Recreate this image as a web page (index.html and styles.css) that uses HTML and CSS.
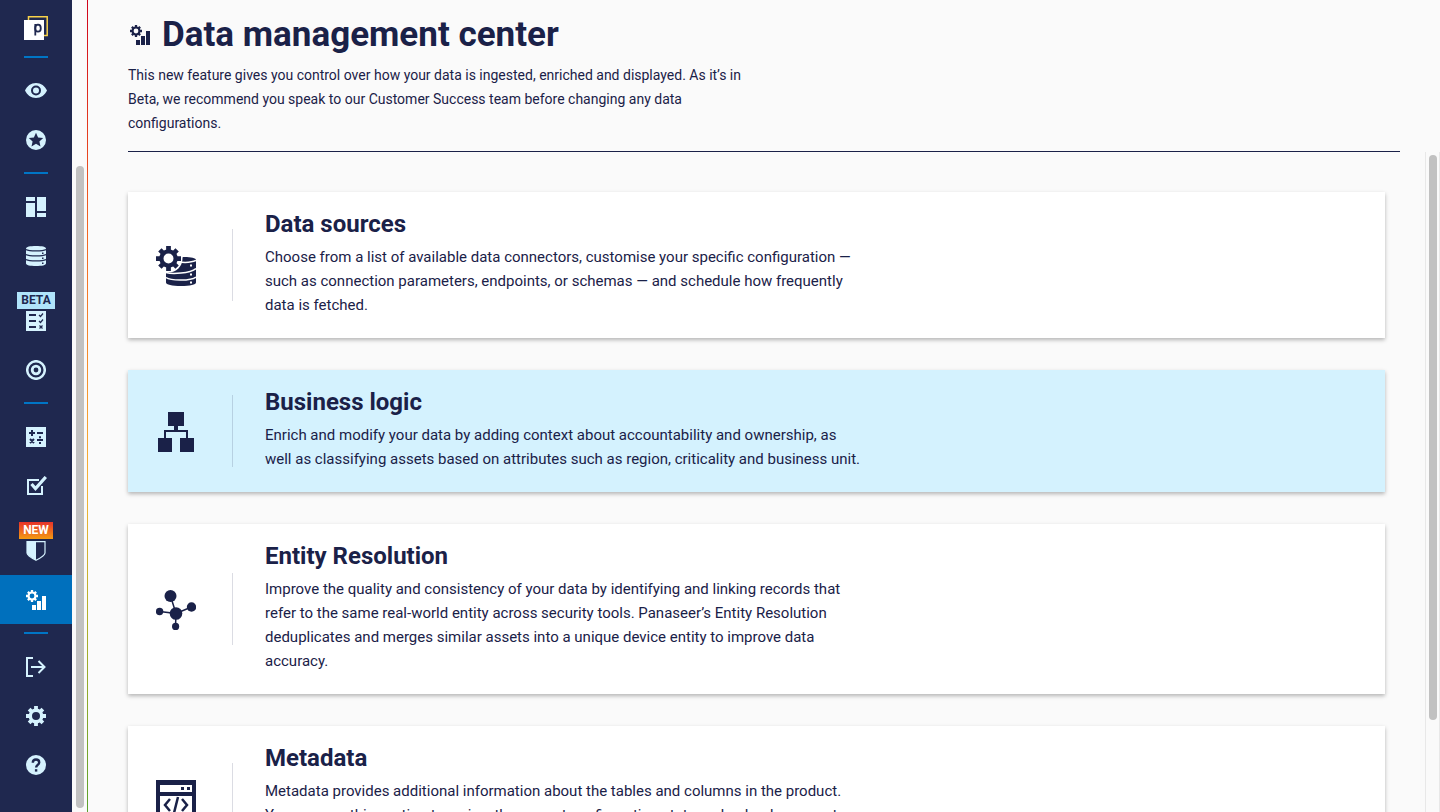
FILE: index.html
```html
<!DOCTYPE html>
<html lang="en">
  <head>
    <meta charset="utf-8" />
    <title>Data management center</title>
    <meta name="viewport" content="width=device-width, initial-scale=1.0" />
    <link rel="stylesheet" href="styles.css">
  </head>

  <body>
    <!-- Shared icons -->
    <svg class="sprite" aria-hidden="true">
      <symbol id="gear" viewBox="-10 -10 20 20">
        <circle r="5.700" fill="none" stroke="currentColor" stroke-width="3.4"></circle>
        <path fill="none" stroke="currentColor" stroke-width="3.8" d="M0-10V-6M0 10V6M-10 0H-6M10 0H6M6.9-6.9L4.3-4.3M-6.9-6.9L-4.3-4.3M6.9 6.9L4.3 4.3M-6.9 6.9L-4.3 4.3"></path>
      </symbol>
      <symbol id="manage" viewBox="0 0 20 20">
        <use href="#gear" x="0" y="0" width="12" height="12"></use>
        <path fill="currentColor" d="M6 15h4v5H6zM11 11h4v9h-4zM16 6h4v14h-4z"></path>
      </symbol>
    </svg>

    <div class="app">
      <nav class="sidebar" aria-label="Main">
        <a class="logo" href="#" aria-label="Home">
          <svg viewBox="0 0 24 24">
            <path fill="none" stroke="#f8d24a" stroke-width="1.5" d="M4.5 4V.8h18.7v18.7H20"></path>
            <path fill="#fff" d="M0 4h20v20H0z"></path>
            <path fill="none" stroke="#1f284f" stroke-width="1.8" d="M11.3 8v11.500"></path>
            <ellipse cx="14" cy="12.200" rx="2.8" ry="3.5" fill="none" stroke="#1f284f" stroke-width="1.8"></ellipse>
          </svg>
        </a>
        <hr>
        <a class="item" href="#" aria-label="Overview">
          <svg class="wide" viewBox="0 0 22 20"><path fill="currentColor" fill-rule="evenodd" d="M0 9.500C2 5 6 2 11 2S20 5 22 9.500C20 14 16 17 11 17S2 14 0 9.500zM11 4.500a5 5 0 1 0 0 10a5 5 0 0 0 0-10z"></path><circle cx="11" cy="9.500" r="3" fill="currentColor"></circle></svg>
        </a>
        <a class="item" href="#" aria-label="Favourites">
          <svg viewBox="0 0 20 20"><path fill="currentColor" fill-rule="evenodd" d="M10 0a10 10 0 1 0 0 20a10 10 0 0 0 0-20zM10 2.800l2.100 4.700 5.100.5-3.800 3.400 1.100 5-4.500-2.600-4.500 2.600 1.100-5L2.800 8l5.100-.5z"></path></svg>
        </a>
        <hr>
        <a class="item" href="#" aria-label="Dashboards">
          <svg viewBox="0 0 20 20"><path fill="currentColor" d="M0 0h9v4H0zM0 6h9v14H0zM11 0h9v14h-9zM11 16h9v4h-9z"></path></svg>
        </a>
        <a class="item" href="#" aria-label="Data">
          <svg viewBox="0 0 20 20">
            <path fill="currentColor" d="M0 2.500C0 .8 4 0 10 0s10 .8 10 2.500v15c0 1.700-4 2.500-10 2.500S0 19.200 0 17.500z"></path>
            <path class="cut" d="M0 3.500C3 5.300 17 5.300 20 3.500M0 8.500C3 10.300 17 10.300 20 8.500M0 13.500C3 15.300 17 15.300 20 13.500"></path>
            <path fill="#1f284f" d="M16 6.500h1.500v1.500H16zM16 11.500h1.500V13H16zM16 16.500h1.500V18H16z"></path>
          </svg>
        </a>
        <a class="item tagged" href="#">
          <span class="tag beta">BETA</span>
          <svg viewBox="0 0 20 20">
            <path fill="currentColor" d="M0 0h20v20H0z"></path>
            <path class="cut thick" d="M3 4h7M3 10h7M3 16h7"></path>
            <path class="cut" d="M13 4l1.500 1.500L17 2.500M13 10l1.500 1.500L17 8.500M13.500 14.500l3 3M16.500 14.500l-3 3"></path>
          </svg>
        </a>
        <a class="item" href="#" aria-label="Targets">
          <svg viewBox="0 0 20 20"><g fill="none" stroke="currentColor" stroke-width="2.500"><circle cx="10" cy="10" r="8.800"></circle><circle cx="10" cy="10" r="3.800" stroke-width="2.800"></circle></g></svg>
        </a>
        <hr>
        <a class="item" href="#" aria-label="Metrics">
          <svg viewBox="0 0 20 20">
            <path fill="currentColor" d="M0 0h20v20H0z"></path>
            <path class="cut thick" d="M3 6h6M6 3v6M11 6h6M11 13h6M4 12l4 4M8 12l-4 4"></path>
            <path fill="#1f284f" d="M13 9.200h2v2h-2zM13 15h2v2h-2z"></path>
          </svg>
        </a>
        <a class="item" href="#" aria-label="Controls">
          <svg class="wide" viewBox="0 0 22 20"><path fill="none" stroke="currentColor" stroke-width="2" d="M14 4H3v14h14V10"></path><path fill="none" stroke="currentColor" stroke-width="3.200" d="M6.500 8l4 4.500L20.800 1"></path></svg>
        </a>
        <a class="item tagged" href="#">
          <span class="tag new">NEW</span>
          <svg viewBox="0 0 20 20"><path fill="none" stroke="currentColor" stroke-width="1.200" d="M1 .6h18V12c0 1.800-5 5.200-9 7.300C6 17.200 1 13.800 1 12z"></path><path fill="currentColor" d="M1 1h9v18.300C6 17.200 1 13.800 1 12z"></path></svg>
        </a>
        <a class="item active" href="#" aria-label="Data management center" aria-current="page">
          <svg><use href="#manage"></use></svg>
        </a>
        <hr>
        <a class="item" href="#" aria-label="Log out">
          <svg viewBox="0 0 20 20"><path fill="none" stroke="currentColor" stroke-width="2" d="M7 1H1v18h6M5 10h14M12.500 4l6 6-6 6"></path></svg>
        </a>
        <a class="item" href="#" aria-label="Settings">
          <svg><use href="#gear"></use></svg>
        </a>
        <a class="item" href="#" aria-label="Help">
          <svg viewBox="0 0 20 20"><circle cx="10" cy="10" r="10" fill="currentColor"></circle><path fill="none" stroke="#1f284f" stroke-width="2.400" d="M6.800 7.800c0-2 1.300-3.300 3.200-3.300S13.200 5.800 13.200 7.400c0 2.400-3.100 2.600-3.100 5.200"></path><path fill="#1f284f" d="M8.900 14.200h2.400v2.400H8.900z"></path></svg>
        </a>
      </nav>
      <div class="rail rail-left"><div class="thumb"></div></div>

      <main>
        <header>
          <h1><svg><use href="#manage"></use></svg>Data management center</h1>
          <p>This new feature gives you control over how your data is ingested, enriched and displayed. As it’s in Beta, we recommend you speak to our Customer Success team before changing any data configurations.</p>
        </header>

        <div class="content">
          <div class="cards">
            <a class="card" href="#">
              <span class="icon">
                <svg viewBox="0 0 40 40">
                  <path fill="currentColor" d="M27 11C34 10.800 40 12 40 13.800v22.700c0 2-6 3.500-15 3.500s-15-1.500-15-3.500V25z"></path>
                  <path fill="none" stroke="#fff" stroke-width="1.500" d="M22 16c8 .8 15 0 18-1.500M10 26.500C16 28.200 34 27.500 40 22.500M10 31.500C15 35 35 35 40 31"></path>
                  <path fill="#fff" d="M34 18.500h2v2h-2zM34 27.500h2v2h-2zM34 35.500h2v2h-2z"></path>
                  <circle cx="12.500" cy="12.500" r="14" fill="#fff"></circle>
                  <use href="#gear" x="0" y="0" width="25" height="25"></use>
                </svg>
              </span>
              <div class="text">
                <h2>Data sources</h2>
                <p>Choose from a list of available data connectors, customise your specific configuration — such as connection parameters, endpoints, or schemas — and schedule how frequently data is fetched.</p>
              </div>
            </a>

            <a class="card selected" href="#">
              <span class="icon">
                <svg viewBox="0 0 40 40">
                  <path fill="currentColor" d="M12 0h16v14H12zM2 26h14v14H2zM24 26h14v14H24z"></path>
                  <path fill="none" stroke="currentColor" stroke-width="2" d="M9 26v-7h22v7"></path>
                  <path fill="currentColor" d="M18 14h4v5h-4z"></path>
                </svg>
              </span>
              <div class="text">
                <h2>Business logic</h2>
                <p>Enrich and modify your data by adding context about accountability and ownership, as well as classifying assets based on attributes such as region, criticality and business unit.</p>
              </div>
            </a>

            <a class="card" href="#">
              <span class="icon">
                <svg viewBox="0 0 40 40">
                  <path fill="none" stroke="currentColor" stroke-width="1.500" d="M14.500 6L20 23.500 35.500 17M3.500 21.500L20 23.500l-.5 13"></path>
                  <g fill="currentColor"><circle cx="14.500" cy="6" r="6"></circle><circle cx="20" cy="23.500" r="6.300"></circle><circle cx="35.500" cy="17" r="4.700"></circle><circle cx="3.600" cy="21.500" r="3.700"></circle><circle cx="19.600" cy="36.400" r="3.600"></circle></g>
                </svg>
              </span>
              <div class="text">
                <h2>Entity Resolution</h2>
                <p>Improve the quality and consistency of your data by identifying and linking records that refer to the same real-world entity across security tools. Panaseer’s Entity Resolution deduplicates and merges similar assets into a unique device entity to improve data accuracy.</p>
              </div>
            </a>

            <a class="card" href="#">
              <span class="icon">
                <svg viewBox="0 0 40 40">
                  <path fill="currentColor" fill-rule="evenodd" d="M0 0h40v40H0zM4 5v7h32V5zM4 16v20h32V16z"></path>
                  <path fill="currentColor" d="M25 7h3v3h-3zM31 7h3v3h-3z"></path>
                  <path fill="none" stroke="currentColor" stroke-width="2.500" d="M14 19l-5 6 5 6M26 19l5 6-5 6M22 17l-4 16"></path>
                </svg>
              </span>
              <div class="text">
                <h2>Metadata</h2>
                <p>Metadata provides additional information about the tables and columns in the product. You can use this section to review the current configuration state and upload or export metadata for your data sources.</p>
              </div>
            </a>
          </div>
          <div class="rail rail-right"><div class="thumb"></div></div>
        </div>
      </main>
    </div>
  </body>
</html>
```

FILE: styles.css
```css
* {
  box-sizing: border-box;
}
body {
  margin: 0;
  font-family: Roboto, 'Helvetica Neue', sans-serif;
  font-size: 15px;
  line-height: 24px;
  color: #1a2148;
  background: #fafafa;
}
a {
  color: inherit;
  text-decoration: none;
}
h1, h2, p {
  margin: 0;
}
svg {
  display: block;
}
.sprite {
  position: absolute;
  width: 0;
  height: 0;
}
.app {
  display: flex;
  height: 100vh;
  overflow: hidden;
}

/* Sidebar */
.sidebar {
  flex: none;
  width: 72px;
  background: #1f284f;
  color: #d5f2fe;
}
.sidebar hr {
  width: 24px;
  height: 2px;
  margin: 8px auto;
  border: 0;
  background: #0075c5;
}
.logo {
  display: flex;
  justify-content: center;
  height: 48px;
  padding-top: 16px;
}
.logo svg {
  width: 24px;
  height: 24px;
}
.item {
  display: flex;
  align-items: center;
  justify-content: center;
  height: 49px;
}
.item svg {
  width: 20px;
  height: 20px;
}
.item svg.wide {
  width: 22px;
}
.item.active {
  color: #fff;
  background: #0070bd;
}
.item.tagged {
  flex-direction: column;
  gap: 2px;
  height: 65px;
  padding-bottom: 2px;
}
.tag {
  padding: 0 4px;
  font-size: 12px;
  font-weight: 700;
  line-height: 17px;
}
.tag.beta {
  color: #1f284f;
  background: #b0e4fb;
}
.tag.new {
  color: #fff;
  background: linear-gradient(#e6332a, #f39a12);
}
.cut {
  fill: none;
  stroke: #1f284f;
  stroke-width: 1.2;
}
.cut.thick {
  stroke-width: 2;
}

/* Scroll rails */
.rail {
  display: flex;
  flex: none;
  justify-content: center;
  width: 15px;
}
.rail-left {
  align-items: flex-end;
  padding-bottom: 4px;
}
.rail-right {
  padding-top: 3px;
  border: solid #e8e8e8;
  border-width: 0 1px;
}
.thumb {
  width: 8px;
  height: 86%;
  border-radius: 4px;
  background: #c1c1c1;
}
.rail-left .thumb {
  height: 79.5%;
}

/* Main */
main {
  display: flex;
  flex: 1;
  flex-direction: column;
  min-width: 0;
  border-left: 1px solid;
  border-image: linear-gradient(#d0021b, #f26522 28%, #f5b335 60%, #b5b02c 75%, #5aa02c) 1;
}
header {
  margin: 0 40px;
  padding: 15px 0 16px;
  border-bottom: 1px solid #1a2148;
}
h1 {
  display: flex;
  align-items: center;
  gap: 10px;
  margin-bottom: 8px;
  font-size: 35px;
  line-height: 40px;
}
h1 svg {
  width: 24px;
  height: 24px;
  padding: 2px;
}
header p {
  max-width: 640px;
  font-size: 14px;
}
.content {
  display: flex;
  flex: 1;
  min-height: 0;
  overflow: hidden;
}
.cards {
  display: flex;
  flex: 1;
  flex-direction: column;
  gap: 32px;
  padding: 40px;
}
.card {
  display: flex;
  flex: none;
  align-items: center;
  background: #fff;
  box-shadow: 0 2px 4px rgba(0, 0, 0, 0.28);
}
.card.selected {
  background: #d4f2fe;
}
.icon {
  display: flex;
  align-items: center;
  width: 105px;
  height: 72px;
  padding: 2px 0 0 28px;
  border-right: 1px solid rgba(31, 40, 79, 0.16);
}
.icon svg {
  width: 40px;
  height: 40px;
}
.text {
  max-width: 664px;
  padding: 16px 32px 21px;
}
.text h2 {
  margin-bottom: 5px;
  font-size: 24px;
  line-height: 32px;
}
```
